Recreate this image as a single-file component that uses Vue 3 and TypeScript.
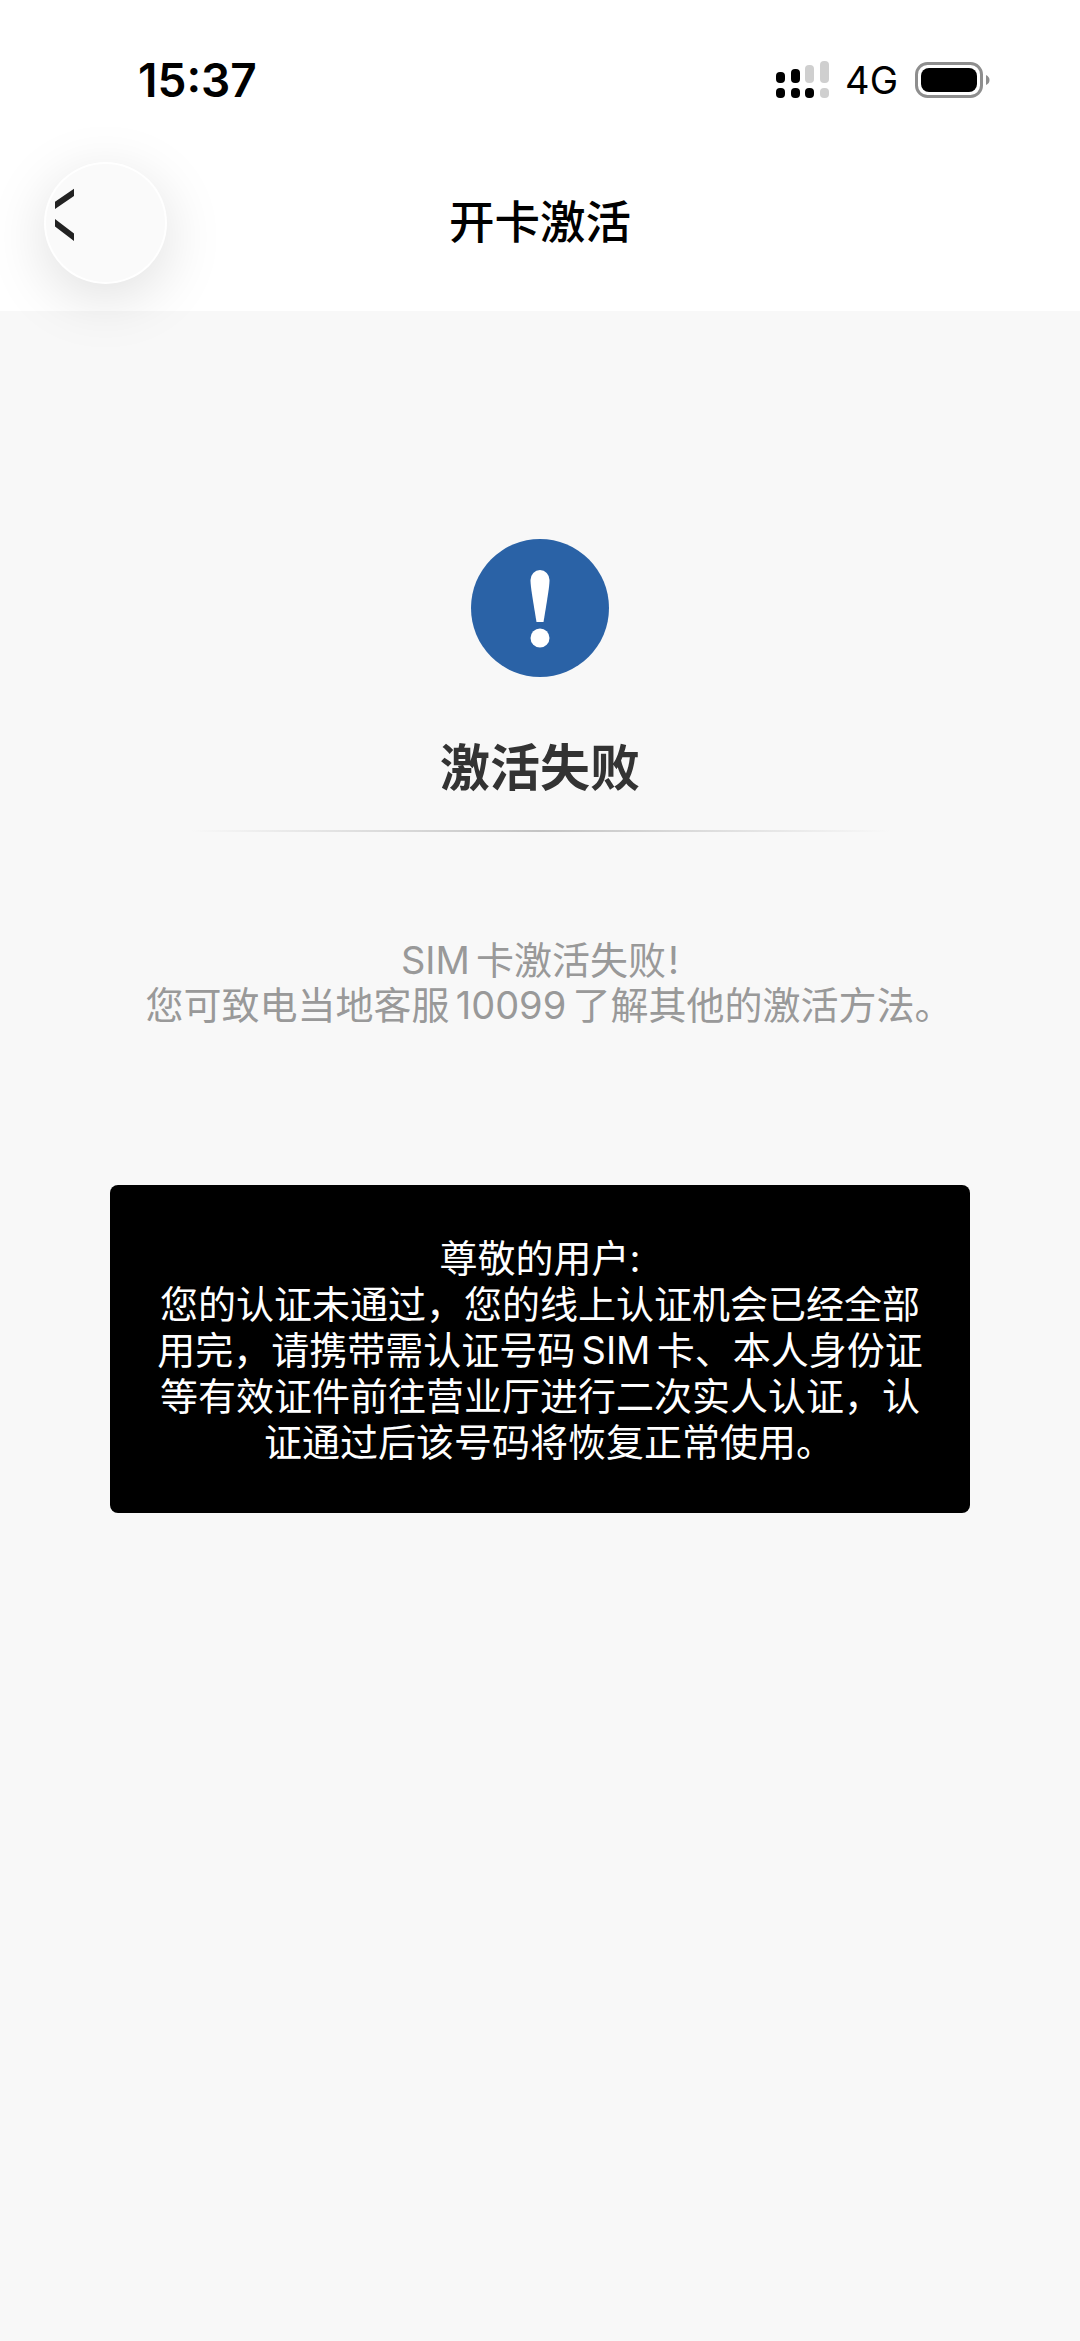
<script setup lang="ts">
const signal: { x: number; y: number; h: number; on: boolean }[] = [
  { x: 775, y: 73, h: 11, on: true },
  { x: 790, y: 70, h: 14, on: true },
  { x: 804, y: 66, h: 18, on: false },
  { x: 819, y: 62, h: 22, on: false },
]
</script>

<template>
  <div class="page">
    <header class="head">
      <div class="status">
        <span class="time">15:37</span>
        <div class="status-right">
          <svg class="signal" width="54" height="38" viewBox="775 62 54 38">
            <template v-for="b in signal" :key="b.x">
              <rect :x="b.x" :y="b.y" width="9" :height="b.h" rx="4" :fill="b.on ? '#000' : '#cfcfcf'" />
              <rect :x="b.x" y="89" width="9" height="10" rx="4" :fill="b.x === 819 ? '#cfcfcf' : '#000'" />
            </template>
          </svg>
          <span class="net">4G</span>
          <svg class="battery" width="75" height="36" viewBox="0 0 75 36">
            <rect x="1.5" y="1.5" width="65" height="33" rx="11" fill="none" stroke="#8e8e8e" stroke-width="3" />
            <rect x="6" y="6" width="56" height="24" rx="8" fill="#000" />
            <path d="M71 13c2.500 1 3.500 3 3.500 5s-1 4-3.500 5z" fill="#8e8e8e" />
          </svg>
        </div>
      </div>
      <div class="nav">开卡激活</div>
      <div class="back">
        <svg class="chev" width="19" height="54" viewBox="0 0 19 54">
          <path d="M24 1 L-12 25.500 L24 53" fill="none" stroke="#222" stroke-width="6" />
        </svg>
      </div>
    </header>

    <main class="main">
      <svg class="alert" width="138" height="138" viewBox="0 0 138 138">
        <circle cx="69" cy="69" r="69" fill="#2a62a6" />
        <path d="M59.500 41a9.500 10 0 0 1 19 0c0 5-1 12-6 42h-7c-5-30-6-37-6-42z" fill="#fff" />
        <circle cx="69" cy="99" r="9.500" fill="#fff" />
      </svg>
      <h1 class="title">激活失败</h1>
      <div class="rule"></div>
      <p class="desc">SIM 卡激活失败<span class="bang">!</span><br />您可致电当地客服 10099 了解其他的激活方法<span class="stop">。</span></p>
      <section class="notice">
        尊敬的用户:<br />
        您的认证未通过，您的线上认证机会已经全部<br />
        用完，请携带需认证号码 SIM 卡、本人身份证<br />
        等有效证件前往营业厅进行二次实人认证，认<br />
        证通过后该号码将恢复正常使用<span class="stop">。</span>
      </section>
    </main>
  </div>
</template>

<style>
html, body { margin: 0; background: #f8f8f8; }
</style>

<style scoped>
.page {
  width: 1080px;
  height: 2341px;
  background: #f8f8f8;
  overflow: hidden;
  font-family: Inter, "Noto Sans CJK SC", sans-serif;
}
.head {
  position: relative;
  height: 311px;
  background: #fff;
}
.status {
  height: 161px;
  display: flex;
  justify-content: space-between;
  align-items: flex-start;
  padding: 0 90px 0 138px;
  box-sizing: border-box;
}
.time {
  margin-top: 52px;
  font-size: 46px;
  line-height: 56px;
  font-weight: 600;
  color: #000;
}
.status-right {
  display: flex;
  align-items: center;
  margin-top: 61px;
  height: 38px;
}
.signal { display: block; }
.net {
  margin-left: 15px;
  font-size: 38px;
  line-height: 38px;
  font-weight: 400;
  color: #000;
}
.battery { display: block; margin-left: 17px; }
.nav {
  text-align: center;
  font-size: 45.500px;
  line-height: 124px;
  font-weight: 500;
  color: #000;
}
.back {
  position: absolute;
  left: 44px;
  top: 162px;
  width: 123px;
  height: 122px;
  box-sizing: border-box;
  border: 2px solid #fff;
  border-radius: 50%;
  background: #fafafa;
  box-shadow: 0 14px 60px rgba(0, 0, 0, 0.13);
}
.chev {
  position: absolute;
  left: 9px;
  top: 24px;
  display: block;
}
.main {
  display: flex;
  flex-direction: column;
  align-items: center;
  padding-top: 228px;
}
.alert { display: block; }
.title {
  margin: 56px 0 0;
  font-size: 50px;
  line-height: 70px;
  font-weight: 700;
  color: #333;
}
.rule {
  width: 700px;
  height: 2px;
  margin-top: 27px;
  background: linear-gradient(90deg, rgba(190,190,190,0), #c4c4c4 50%, rgba(190,190,190,0));
}
.desc {
  margin: 106px 0 0;
  text-align: center;
  font-size: 38px;
  line-height: 45px;
  word-spacing: -4.500px;
  color: #999;
}
.bang { margin-left: 2px; }
.stop { letter-spacing: -18px; }
.notice {
  width: 860px;
  height: 328px;
  margin-top: 157px;
  box-sizing: border-box;
  padding-top: 50px;
  background: #000;
  border-radius: 8px;
  text-align: center;
  font-size: 38px;
  line-height: 46px;
  word-spacing: -4.500px;
  color: #fff;
}
</style>
